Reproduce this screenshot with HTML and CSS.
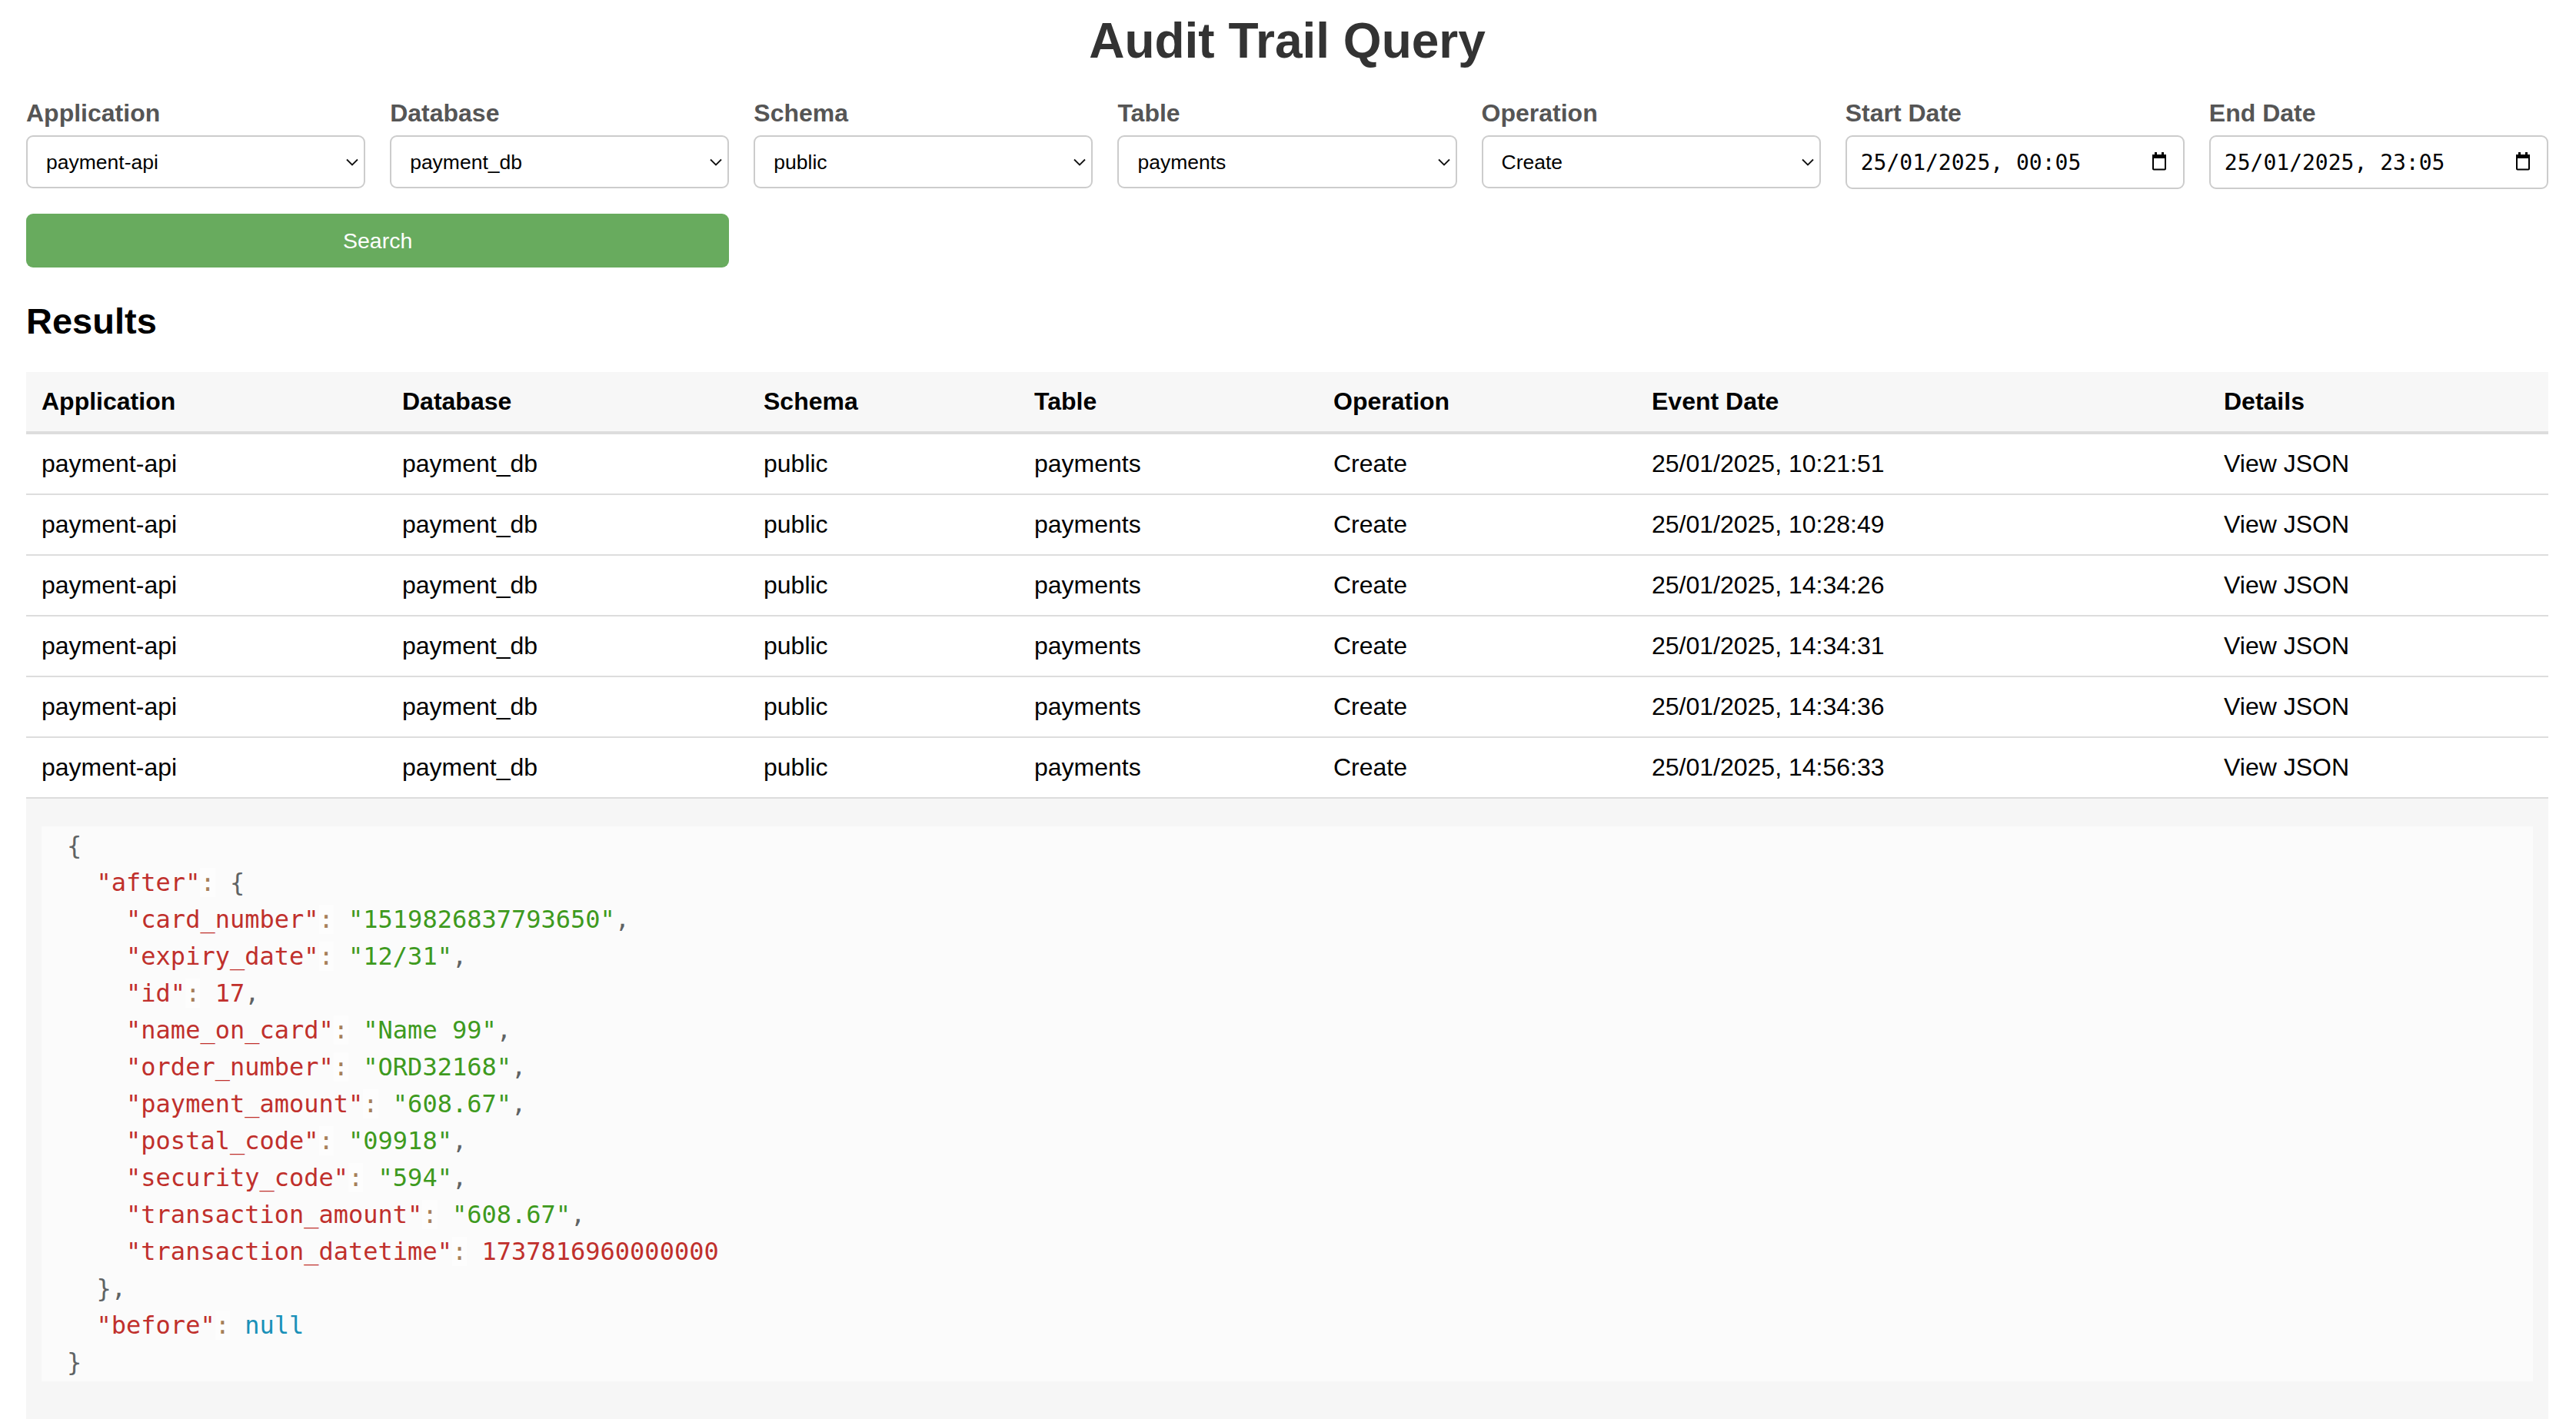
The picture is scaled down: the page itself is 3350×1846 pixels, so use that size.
FILE: index.html
```html
<!DOCTYPE html>
<html lang="en">
<head>
<meta charset="utf-8">
<title>Audit Trail Query</title>
<link rel="stylesheet" href="styles.css">
</head>
<body>
<div class="page">
  <h1 class="title">Audit Trail Query</h1>

  <form class="filters">
    <div class="field">
      <label class="field-label">Application</label>
      <div class="control">
        <select class="input select"><option>payment-api</option></select>
        <svg class="chevron" viewBox="0 0 16 10" width="16" height="10"><polyline points="1,1.5 8,8.5 15,1.5" fill="none" stroke="#111" stroke-width="1.8"/></svg>
      </div>
    </div>
    <div class="field">
      <label class="field-label">Database</label>
      <div class="control">
        <select class="input select"><option>payment_db</option></select>
        <svg class="chevron" viewBox="0 0 16 10" width="16" height="10"><polyline points="1,1.5 8,8.5 15,1.5" fill="none" stroke="#111" stroke-width="1.8"/></svg>
      </div>
    </div>
    <div class="field">
      <label class="field-label">Schema</label>
      <div class="control">
        <select class="input select"><option>public</option></select>
        <svg class="chevron" viewBox="0 0 16 10" width="16" height="10"><polyline points="1,1.5 8,8.5 15,1.5" fill="none" stroke="#111" stroke-width="1.8"/></svg>
      </div>
    </div>
    <div class="field">
      <label class="field-label">Table</label>
      <div class="control">
        <select class="input select"><option>payments</option></select>
        <svg class="chevron" viewBox="0 0 16 10" width="16" height="10"><polyline points="1,1.5 8,8.5 15,1.5" fill="none" stroke="#111" stroke-width="1.8"/></svg>
      </div>
    </div>
    <div class="field">
      <label class="field-label">Operation</label>
      <div class="control">
        <select class="input select"><option>Create</option></select>
        <svg class="chevron" viewBox="0 0 16 10" width="16" height="10"><polyline points="1,1.5 8,8.5 15,1.5" fill="none" stroke="#111" stroke-width="1.8"/></svg>
      </div>
    </div>
    <div class="field">
      <label class="field-label">Start Date</label>
      <div class="control">
        <input class="input date" type="text" value="25/01/2025, 00:05" readonly>
        <svg class="calendar" viewBox="0 0 20 24" width="20" height="24"><rect x="4" y="0" width="3" height="4" fill="#000"/><rect x="13" y="0" width="3" height="4" fill="#000"/><rect x="1" y="3" width="18" height="5" fill="#000"/><rect x="2" y="4" width="16" height="18.5" rx="1" fill="none" stroke="#000" stroke-width="2"/></svg>
      </div>
    </div>
    <div class="field">
      <label class="field-label">End Date</label>
      <div class="control">
        <input class="input date" type="text" value="25/01/2025, 23:05" readonly>
        <svg class="calendar" viewBox="0 0 20 24" width="20" height="24"><rect x="4" y="0" width="3" height="4" fill="#000"/><rect x="13" y="0" width="3" height="4" fill="#000"/><rect x="1" y="3" width="18" height="5" fill="#000"/><rect x="2" y="4" width="16" height="18.5" rx="1" fill="none" stroke="#000" stroke-width="2"/></svg>
      </div>
    </div>
    <button type="button" class="search-btn">Search</button>
  </form>

  <h2 class="results-title">Results</h2>

  <table class="results">
    <colgroup>
      <col class="c-app"><col class="c-db"><col class="c-schema"><col class="c-table"><col class="c-op"><col class="c-date"><col class="c-details">
    </colgroup>
    <thead>
      <tr><th>Application</th><th>Database</th><th>Schema</th><th>Table</th><th>Operation</th><th>Event Date</th><th>Details</th></tr>
    </thead>
    <tbody>
      <tr><td>payment-api</td><td>payment_db</td><td>public</td><td>payments</td><td>Create</td><td>25/01/2025, 10:21:51</td><td>View JSON</td></tr>
      <tr><td>payment-api</td><td>payment_db</td><td>public</td><td>payments</td><td>Create</td><td>25/01/2025, 10:28:49</td><td>View JSON</td></tr>
      <tr><td>payment-api</td><td>payment_db</td><td>public</td><td>payments</td><td>Create</td><td>25/01/2025, 14:34:26</td><td>View JSON</td></tr>
      <tr><td>payment-api</td><td>payment_db</td><td>public</td><td>payments</td><td>Create</td><td>25/01/2025, 14:34:31</td><td>View JSON</td></tr>
      <tr><td>payment-api</td><td>payment_db</td><td>public</td><td>payments</td><td>Create</td><td>25/01/2025, 14:34:36</td><td>View JSON</td></tr>
      <tr><td>payment-api</td><td>payment_db</td><td>public</td><td>payments</td><td>Create</td><td>25/01/2025, 14:56:33</td><td>View JSON</td></tr>
      <tr class="json-row"><td colspan="7"><pre class="code"><span class="p">{</span>
  <span class="k">"after"</span><span class="o">:</span> <span class="p">{</span>
    <span class="k">"card_number"</span><span class="o">:</span> <span class="s">"1519826837793650"</span><span class="p">,</span>
    <span class="k">"expiry_date"</span><span class="o">:</span> <span class="s">"12/31"</span><span class="p">,</span>
    <span class="k">"id"</span><span class="o">:</span> <span class="n">17</span><span class="p">,</span>
    <span class="k">"name_on_card"</span><span class="o">:</span> <span class="s">"Name 99"</span><span class="p">,</span>
    <span class="k">"order_number"</span><span class="o">:</span> <span class="s">"ORD32168"</span><span class="p">,</span>
    <span class="k">"payment_amount"</span><span class="o">:</span> <span class="s">"608.67"</span><span class="p">,</span>
    <span class="k">"postal_code"</span><span class="o">:</span> <span class="s">"09918"</span><span class="p">,</span>
    <span class="k">"security_code"</span><span class="o">:</span> <span class="s">"594"</span><span class="p">,</span>
    <span class="k">"transaction_amount"</span><span class="o">:</span> <span class="s">"608.67"</span><span class="p">,</span>
    <span class="k">"transaction_datetime"</span><span class="o">:</span> <span class="n">1737816960000000</span>
  <span class="p">}</span><span class="p">,</span>
  <span class="k">"before"</span><span class="o">:</span> <span class="kw">null</span>
<span class="p">}</span></pre></td></tr>
    </tbody>
  </table>
</div>
</body>
</html>
```

FILE: styles.css
```css
html, body {
  margin: 0;
  padding: 0;
  background: #ffffff;
}

body {
  font-family: "Liberation Sans", Arial, Helvetica, sans-serif;
  color: #000;
}

.page {
  padding: 16px 36px 0 34px;
}

.title {
  margin: 0 0 39px;
  font-size: 64px;
  line-height: 74px;
  font-weight: bold;
  text-align: center;
  color: #333;
}

.filters {
  display: grid;
  grid-template-columns: repeat(7, 1fr);
  gap: 32px;
  margin: 0;
}

.field {
  display: flex;
  flex-direction: column;
  min-width: 0;
}

.field-label {
  display: block;
  font-size: 32px;
  line-height: 37px;
  font-weight: bold;
  color: #555;
  margin-bottom: 10px;
}

.control {
  position: relative;
}

.input {
  box-sizing: border-box;
  display: block;
  width: 100%;
  height: 69px;
  margin: 0;
  border: 2px solid #cccccc;
  border-radius: 9px;
  background: #fff;
  color: #000;
  outline: none;
  -webkit-appearance: none;
  appearance: none;
}

.select {
  padding: 0 40px 0 24px;
  font-family: "Liberation Sans", Arial, Helvetica, sans-serif;
  font-size: 26.5px;
}

.date {
  padding: 0 50px 0 18px;
  font-family: "DejaVu Sans Mono", "Liberation Mono", monospace;
  font-size: 28px;
  height: 70px;
}

.chevron {
  position: absolute;
  right: 9px;
  top: 30px;
  pointer-events: none;
}

.calendar {
  position: absolute;
  right: 23px;
  top: 22px;
  width: 20px;
  height: 24px;
  pointer-events: none;
}

.search-btn {
  grid-column: span 2;
  height: 70px;
  border: none;
  border-radius: 9px;
  background: #68ab5e;
  color: #fff;
  font-family: "Liberation Sans", Arial, Helvetica, sans-serif;
  font-size: 28.5px;
  cursor: pointer;
}

.results-title {
  margin: 43px 0 39px;
  font-size: 47px;
  line-height: 54px;
  font-weight: bold;
  color: #000;
}

.results {
  width: 100%;
  border-collapse: collapse;
  table-layout: fixed;
  font-size: 32px;
  line-height: 37px;
}

.c-app { width: 469px; }
.c-db { width: 470px; }
.c-schema { width: 352px; }
.c-table { width: 389px; }
.c-op { width: 414px; }
.c-date { width: 744px; }
.c-details { width: auto; }

.results th {
  background: #f7f7f7;
  text-align: left;
  font-weight: bold;
  padding: 20px 20px;
  border-bottom: 4px solid #dddddd;
  white-space: nowrap;
}

.results td {
  padding: 20px 20px;
  border-bottom: 2px solid #dddddd;
  white-space: nowrap;
}

.results .json-row td {
  background: #f6f6f6;
  padding: 20px 20px 80px;
  border-bottom: none;
}

.code {
  margin: 16px 0 0;
  padding: 1px 33px;
  background: #fbfbfb;
  font-family: "DejaVu Sans Mono", "Liberation Mono", monospace;
  font-size: 32px;
  line-height: 48px;
  color: #5f6364;
  white-space: pre;
}

.code .p { color: #5f6364; }
.code .k { color: #c0302c; }
.code .o { color: #a67f59; background: rgba(255, 255, 255, 0.6); }
.code .s { color: #3e9a1e; }
.code .n { color: #c0302c; }
.code .kw { color: #1990b8; }
```
